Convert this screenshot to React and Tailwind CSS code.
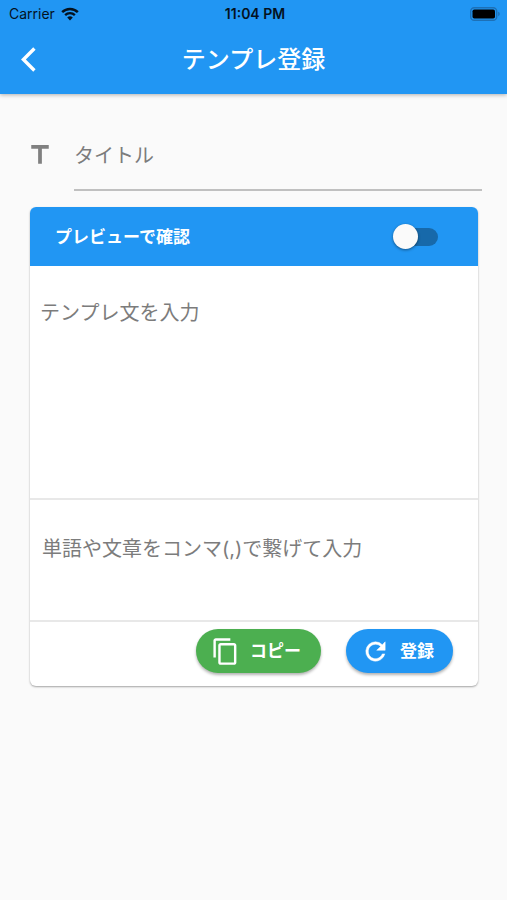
import { useState } from 'react';
import { MdContentCopy, MdTitle } from 'react-icons/md';

function WifiIcon() {
  return (
    <svg viewBox="0 0 20 15" className="w-[18px] h-[14px]" fill="none" stroke="#04121f" aria-hidden="true">
      <path d="M1.3 5.4a12.4 12.4 0 0 1 17.4 0" strokeWidth="2.8" />
      <path d="M4.6 8.8a7.7 7.7 0 0 1 10.8 0" strokeWidth="2.6" />
      <path d="M10 14.6 6.9 11.4a4.4 4.4 0 0 1 6.2 0z" fill="#04121f" stroke="none" />
    </svg>
  );
}

function BatteryIcon() {
  return (
    <svg viewBox="0 0 31 14" className="w-[31px] h-[14px]" aria-hidden="true">
      <rect x="0.7" y="0.7" width="26" height="12.6" rx="3.6" fill="none" stroke="#1d70b6" strokeWidth="1.4" />
      <rect x="2.5" y="2.5" width="22.5" height="9" rx="1.8" fill="#000" />
      <path d="M28.2 4.8c2 .6 2 3.8 0 4.4z" fill="#1d70b6" />
    </svg>
  );
}

function BackIcon() {
  return (
    <svg viewBox="0 0 24 24" className="w-[29px] h-[29px]" fill="none" stroke="currentColor" strokeWidth="2.8" aria-hidden="true">
      <path d="M16.9 2.9 7.8 12l9.1 9.1" />
    </svg>
  );
}

function RefreshIcon() {
  return (
    <svg viewBox="0 0 24 24" className="w-[29px] h-[29px]" fill="currentColor" stroke="currentColor" strokeWidth="0.4" aria-hidden="true">
      <path d="M17.65 6.35A7.95 7.95 0 0 0 12 4a8 8 0 1 0 7.73 10h-2.08A6 6 0 1 1 12 6c1.66 0 3.14.69 4.22 1.78L13 11h7V4z" />
    </svg>
  );
}

function StatusBar() {
  return (
    <div className="grid grid-cols-3 items-center h-[27px] pl-[9px] pr-[6px] text-sm text-[#04121f]">
      <div className="flex items-center gap-[6px]">
        <span>Carrier</span>
        <WifiIcon />
      </div>
      <span className="text-center font-semibold whitespace-nowrap">11:04 PM</span>
      <div className="flex justify-end">
        <BatteryIcon />
      </div>
    </div>
  );
}

export default function App() {
  const [title, setTitle] = useState('');
  const [template, setTemplate] = useState('');
  const [words, setWords] = useState('');
  const [preview, setPreview] = useState(false);

  return (
    <div className="min-h-screen bg-[#fafafa] font-[Inter,'Noto_Sans_CJK_JP',sans-serif]">
      {/* App bar */}
      <header className="bg-[#2196f3] shadow-[0_1px_4px_rgba(0,0,0,0.3)]">
        <StatusBar />
        <div className="grid grid-cols-[56px_1fr_56px] items-center h-[67px] pb-[2px]">
          <button type="button" aria-label="戻る" className="flex justify-center text-white">
            <BackIcon />
          </button>
          <h1 className="text-center text-2xl font-medium text-white">テンプレ登録</h1>
        </div>
      </header>

      <main className="pt-[24px] pb-8">
        {/* Title */}
        <div className="flex items-center px-[25px]">
          <label htmlFor="title" aria-label="タイトル" className="w-[49px] shrink-0 text-[#808080]">
            <MdTitle className="w-[30px] h-[30px]" />
          </label>
          <input
            id="title"
            type="text"
            value={title}
            onChange={(e) => setTitle(e.target.value)}
            placeholder="タイトル"
            className="flex-1 min-w-0 h-[73px] pt-[4px] border-b-2 border-[#c0c0c0] bg-transparent outline-none text-xl text-gray-900 placeholder:text-[#7c7c7c]"
          />
        </div>

        {/* Template card */}
        <section className="mt-[16px] ml-[30px] mr-[29px] rounded-md overflow-hidden bg-white shadow-[0_1px_2px_rgba(0,0,0,0.35)]">
          <div className="flex items-center justify-between h-[59px] pl-[25px] pr-[40px] bg-[#2196f3]">
            <label htmlFor="preview" className="pt-[2px] text-[17px] font-bold text-white">
              プレビューで確認
            </label>
            <span className="relative flex items-center w-[45px] h-[25px]">
              <input
                id="preview"
                type="checkbox"
                role="switch"
                checked={preview}
                onChange={(e) => setPreview(e.target.checked)}
                className="peer appearance-none w-full h-[18px] ml-[5px] rounded-full bg-[#1769aa] cursor-pointer"
              />
              <span className="absolute left-0 top-0 w-[25px] h-[25px] rounded-full bg-[#fafafa] shadow-[0_1px_3px_rgba(0,0,0,0.45)] pointer-events-none transition-transform peer-checked:translate-x-5" />
            </span>
          </div>

          <textarea
            aria-label="テンプレ文"
            value={template}
            onChange={(e) => setTemplate(e.target.value)}
            placeholder="テンプレ文を入力"
            className="block w-full h-[234px] pt-[33px] px-[10px] resize-none outline-none border-b-2 border-[#e8e8e8] text-xl text-gray-900 placeholder:text-[#7c7c7c]"
          />

          <input
            type="text"
            aria-label="単語や文章"
            value={words}
            onChange={(e) => setWords(e.target.value)}
            placeholder="単語や文章をコンマ(,)で繋げて入力"
            className="block w-full h-[122px] pb-[22px] px-[12px] outline-none border-b-2 border-[#e8e8e8] text-xl text-gray-900 placeholder:text-[#7c7c7c]"
          />

          <div className="flex justify-end items-center gap-[25px] h-[64px] pb-[6px] pr-[25px] text-[17px] font-bold text-white">
            <button
              type="button"
              className="flex items-center gap-[10px] h-[44px] pl-[15px] pr-[20px] rounded-full bg-[#4caf50] shadow-[0_2px_3px_rgba(0,0,0,0.3)]"
            >
              <MdContentCopy className="w-[29px] h-[29px]" />
              <span className="pt-[2px]">コピー</span>
            </button>
            <button
              type="button"
              className="flex items-center gap-[10px] h-[44px] pl-[15px] pr-[19px] rounded-full bg-[#2196f3] shadow-[0_2px_3px_rgba(0,0,0,0.3)]"
            >
              <RefreshIcon />
              <span className="pt-[2px]">登録</span>
            </button>
          </div>
        </section>
      </main>
    </div>
  );
}
